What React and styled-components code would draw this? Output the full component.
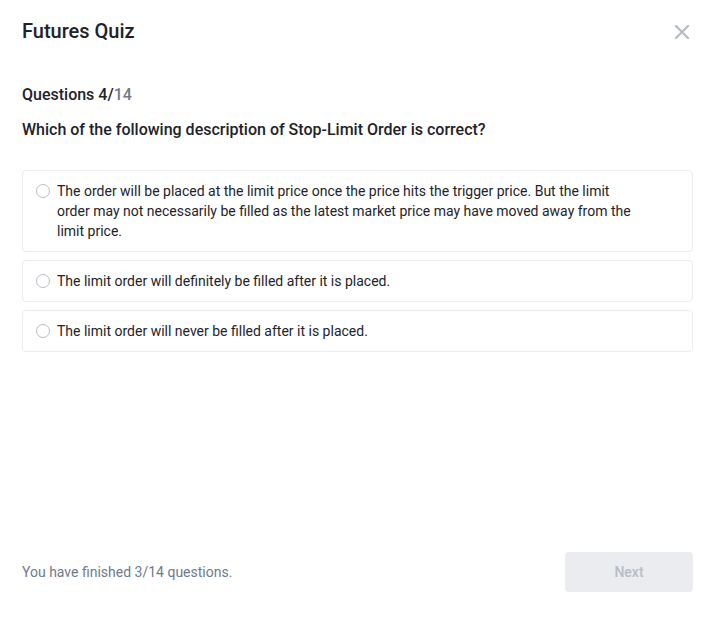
import React from "react"
import styled, { createGlobalStyle } from "styled-components"

const GlobalStyle = createGlobalStyle`
  html, body {
    margin: 0;
    padding: 0;
    background: #fff;
  }
  * { box-sizing: border-box; }
  body {
    font-family: "Roboto", "Liberation Sans", sans-serif;
    color: #1E2329;
  }
`

const Modal = styled.div`
  width: 715px;
  height: 617px;
  padding: 0 22px 0 22px;
  display: flex;
  flex-direction: column;
  background: #fff;
`

const Header = styled.div`
  display: flex;
  align-items: center;
  justify-content: space-between;
  height: 60px;
  padding-top: 1px;
`

const Title = styled.h1`
  margin: 0;
  font-size: 20px;
  font-weight: 500;
  color: #1E2329;
`

const CloseButton = styled.button`
  border: none;
  background: none;
  padding: 0;
  margin-right: 1px;
  margin-top: 2px;
  width: 20px;
  height: 20px;
  display: flex;
  align-items: center;
  justify-content: center;
  cursor: pointer;
`

const Counter = styled.div`
  margin-top: 23px;
  font-size: 16px;
  font-weight: 500;
  line-height: 24px;
`

const Total = styled.span`
  color: #707A8A;
`

const Question = styled.div`
  margin-top: 11px;
  font-size: 16px;
  font-weight: 500;
  line-height: 24px;
`

const Options = styled.div`
  margin-top: 28px;
  display: flex;
  flex-direction: column;
  gap: 8px;
`

const Option = styled.label`
  display: flex;
  align-items: flex-start;
  gap: 7px;
  padding: 10px 56px 10px 13px;
  border: 1px solid #EAECEF;
  border-radius: 4px;
  font-size: 14px;
  line-height: 20px;
  cursor: pointer;
`

const Radio = styled.span`
  flex: none;
  width: 14px;
  height: 14px;
  margin-top: 3px;
  border: 1px solid #B7BDC6;
  border-radius: 50%;
`

const Footer = styled.div`
  margin-top: auto;
  margin-bottom: 25px;
  display: flex;
  align-items: center;
  justify-content: space-between;
`

const Progress = styled.div`
  font-size: 14px;
  color: #707A8A;
`

const NextButton = styled.button`
  width: 128px;
  height: 40px;
  border: none;
  border-radius: 4px;
  background: #EAECEF;
  color: #B7BDC6;
  font-family: inherit;
  font-size: 14px;
  font-weight: 500;
`

const options = [
  "The order will be placed at the limit price once the price hits the trigger price. But the limit order may not necessarily be filled as the latest market price may have moved away from the limit price.",
  "The limit order will definitely be filled after it is placed.",
  "The limit order will never be filled after it is placed.",
]

export default function App() {
  return (
    <>
      <GlobalStyle />
      <Modal>
        <Header>
          <Title>Futures Quiz</Title>
          <CloseButton aria-label="Close">
            <svg width="16" height="16" viewBox="0 0 16 16">
              <path d="M2 2 L14 14 M14 2 L2 14" stroke="#B7BDC6" strokeWidth="2.4" strokeLinecap="round" />
            </svg>
          </CloseButton>
        </Header>
        <Counter>
          Questions 4/<Total>14</Total>
        </Counter>
        <Question>Which of the following description of Stop-Limit Order is correct?</Question>
        <Options>
          {options.map((text) => (
            <Option key={text}>
              <Radio />
              <span>{text}</span>
            </Option>
          ))}
        </Options>
        <Footer>
          <Progress>You have finished 3/14 questions.</Progress>
          <NextButton disabled>Next</NextButton>
        </Footer>
      </Modal>
    </>
  )
}
